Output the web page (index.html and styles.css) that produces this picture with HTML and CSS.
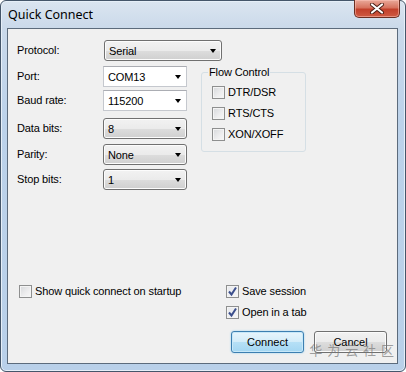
FILE: index.html
```html
<!DOCTYPE html>
<html lang="en">
<head>
  <meta charset="UTF-8" />
  <title>Quick Connect</title>
  <link rel="stylesheet" href="styles.css">
</head>
<body>

  <div class="window">
    <div class="titlebar">
      <span class="title">Quick Connect</span>
      <button class="close-btn" title="Close">
        <svg width="16" height="11" viewBox="0 0 16 11">
          <path d="M3 1.5 L13 9.5 M13 1.5 L3 9.5" stroke="#4a1d14" stroke-width="4" stroke-linecap="round"/>
          <path d="M3 1.5 L13 9.5 M13 1.5 L3 9.5" stroke="#ffffff" stroke-width="2.2" stroke-linecap="round"/>
        </svg>
      </button>
    </div>

    <div class="client">
      <div class="form">
        <label class="lbl">Protocol:</label>
        <div class="select wide"><span>Serial</span><i class="arrow"></i></div>

        <label class="lbl">Port:</label>
        <div class="combo"><span>COM13</span><i class="arrow"></i></div>

        <fieldset class="group">
          <legend>Flow Control</legend>
          <div class="check-list">
            <label class="check"><span class="box"></span>DTR/DSR</label>
            <label class="check"><span class="box"></span>RTS/CTS</label>
            <label class="check"><span class="box"></span>XON/XOFF</label>
          </div>
        </fieldset>

        <label class="lbl">Baud rate:</label>
        <div class="combo"><span>115200</span><i class="arrow"></i></div>

        <label class="lbl">Data bits:</label>
        <div class="select"><span>8</span><i class="arrow"></i></div>

        <label class="lbl">Parity:</label>
        <div class="select"><span>None</span><i class="arrow"></i></div>

        <label class="lbl">Stop bits:</label>
        <div class="select"><span>1</span><i class="arrow"></i></div>
      </div>

      <div class="bottom">
        <div class="options">
          <label class="check"><span class="box"></span>Show quick connect on startup</label>
          <label class="check"><span class="box checked"><svg width="11" height="11" viewBox="0 0 11 11"><path d="M2 5.5 L4.5 8.5 L9 1.5" fill="none" stroke="#3c4f8c" stroke-width="2"/></svg></span>Save session</label>
          <span></span>
          <label class="check"><span class="box checked"><svg width="11" height="11" viewBox="0 0 11 11"><path d="M2 5.5 L4.5 8.5 L9 1.5" fill="none" stroke="#3c4f8c" stroke-width="2"/></svg></span>Open in a tab</label>
        </div>

        <div class="buttons">
          <button class="btn default">Connect</button>
          <button class="btn">Cancel</button>
          <div class="watermark">华 为 云 社 区</div>
        </div>
      </div>
    </div>
  </div>

</body>
</html>
```

FILE: styles.css
```css
body {
  margin: 0;
  padding: 0;
  font-family: "Liberation Sans", Arial, sans-serif;
  font-size: 11px;
  letter-spacing: -0.12px;
  color: #000;
  background: #ffffff;
}

.window {
  width: 406px;
  height: 372px;
  box-sizing: border-box;
  border: 1px solid #45566a;
  border-radius: 6px;
  background: linear-gradient(to bottom, #dbe5f0 0px, #cad9ea 28px, #bcd2ea 120px, #b9d0e9 100%);
  box-shadow: inset 0 0 0 1px #e6eff8;
  display: flex;
  flex-direction: column;
  padding: 0 7px 7px 6px;
}

/* title bar */
.titlebar {
  height: 27px;
  display: flex;
  align-items: flex-start;
  justify-content: space-between;
}

.title {
  font-family: "Noto Sans", "Open Sans", sans-serif;
  font-size: 12.5px;
  letter-spacing: 0;
  margin-top: 5px;
  margin-left: 1px;
  color: #000;
}

.close-btn {
  width: 46px;
  height: 18px;
  margin-top: -1px;
  margin-right: -2px;
  padding: 0;
  border: 1px solid #6b2e22;
  border-top: none;
  border-radius: 0 0 5px 5px;
  background: linear-gradient(to bottom, #e9a99a 0%, #d7735f 45%, #c2402b 55%, #cf5a42 100%);
  box-shadow: inset 0 0 0 1px rgba(255, 200, 190, 0.5);
  display: flex;
  align-items: center;
  justify-content: center;
}

/* client area */
.client {
  flex: 1;
  background: #f0f0f0;
  border: 1px solid #5c6b7c;
  display: flex;
  flex-direction: column;
}

.form {
  display: grid;
  grid-template-columns: 86px 98px 105px;
  grid-template-rows: 26px 24px 28px 26px 25px 22px;
  padding: 11px 0 0 9px;
}

.lbl {
  grid-column: 1;
  line-height: 21px;
  align-self: start;
}

.select, .combo {
  grid-column: 2;
  width: 84px;
  height: 21px;
  box-sizing: border-box;
  display: flex;
  align-items: center;
  justify-content: space-between;
  padding: 0 4px;
  align-self: start;
}

.select {
  border: 1px solid #707070;
  border-radius: 3px;
  background: linear-gradient(to bottom, #f2f2f2 0%, #ebebeb 50%, #dddddd 51%, #cfcfcf 100%);
  box-shadow: inset 0 0 0 1px #fcfcfc;
}

.select.wide {
  grid-column: 2 / 4;
  width: 118px;
  margin-left: 1px;
}

.combo {
  border: 1px solid #c5c8ce;
  border-top-color: #abadb3;
  background: #ffffff;
}

.arrow {
  width: 0;
  height: 0;
  border-left: 3.5px solid transparent;
  border-right: 3.5px solid transparent;
  border-top: 4px solid #000;
  margin-right: 1px;
}

/* flow control group */
.group {
  grid-column: 3;
  grid-row: 2 / 6;
  align-self: start;
  margin: 0;
  padding: 0 0 0 6px;
  min-width: 0;
  height: 86px;
  box-sizing: border-box;
  border: 1px solid #d5dfe5;
  border-radius: 3px;
}

.group legend {
  padding: 0 1px;
  line-height: 13px;
}

.check-list {
  display: flex;
  flex-direction: column;
  gap: 8px;
  padding: 7px 0 0 4px;
}

/* checkboxes */
.check {
  display: flex;
  align-items: center;
  gap: 3px;
  height: 13px;
  line-height: 13px;
}

.box {
  width: 13px;
  height: 13px;
  box-sizing: border-box;
  border: 1px solid #8e8f8f;
  background: linear-gradient(135deg, #d6d8db 0%, #eeeeef 60%, #f7f7f7 100%);
  box-shadow: inset 0 0 0 1px #f4f4f4;
  display: flex;
  align-items: center;
  justify-content: center;
  flex-shrink: 0;
}

.box.checked {
  background: linear-gradient(135deg, #e6e8ec 0%, #f6f6f7 100%);
}

/* bottom part */
.bottom {
  margin-top: auto;
  padding: 0 10px 10px 11px;
}

.options {
  display: grid;
  grid-template-columns: 207px auto;
  row-gap: 8px;
}

.buttons {
  position: relative;
  display: flex;
  justify-content: flex-end;
  gap: 10px;
  margin-top: 12px;
}

.btn {
  width: 73px;
  height: 22px;
  font-family: "Liberation Sans", Arial, sans-serif;
  font-size: 11px;
  padding: 0;
  border: 1px solid #707070;
  border-radius: 3px;
  background: linear-gradient(to bottom, #f2f2f2 0%, #ebebeb 50%, #dddddd 51%, #cfcfcf 100%);
  box-shadow: inset 0 0 0 1px #fbfbfb;
  color: #000;
}

.btn.default {
  border-color: #3c7fb1;
  background: linear-gradient(to bottom, #e8f5fc 0%, #d2ecf9 50%, #b6e0f6 51%, #a3d6f2 100%);
  box-shadow: inset 0 0 0 1px #c7e8f9, 0 0 2px #8ccdef;
}

.watermark {
  position: absolute;
  right: -8px;
  top: 11px;
  font-family: "Noto Sans CJK SC", sans-serif;
  font-size: 13px;
  line-height: 16px;
  letter-spacing: 1px;
  color: rgba(120, 120, 120, 0.7);
  white-space: nowrap;
  pointer-events: none;
}
```
